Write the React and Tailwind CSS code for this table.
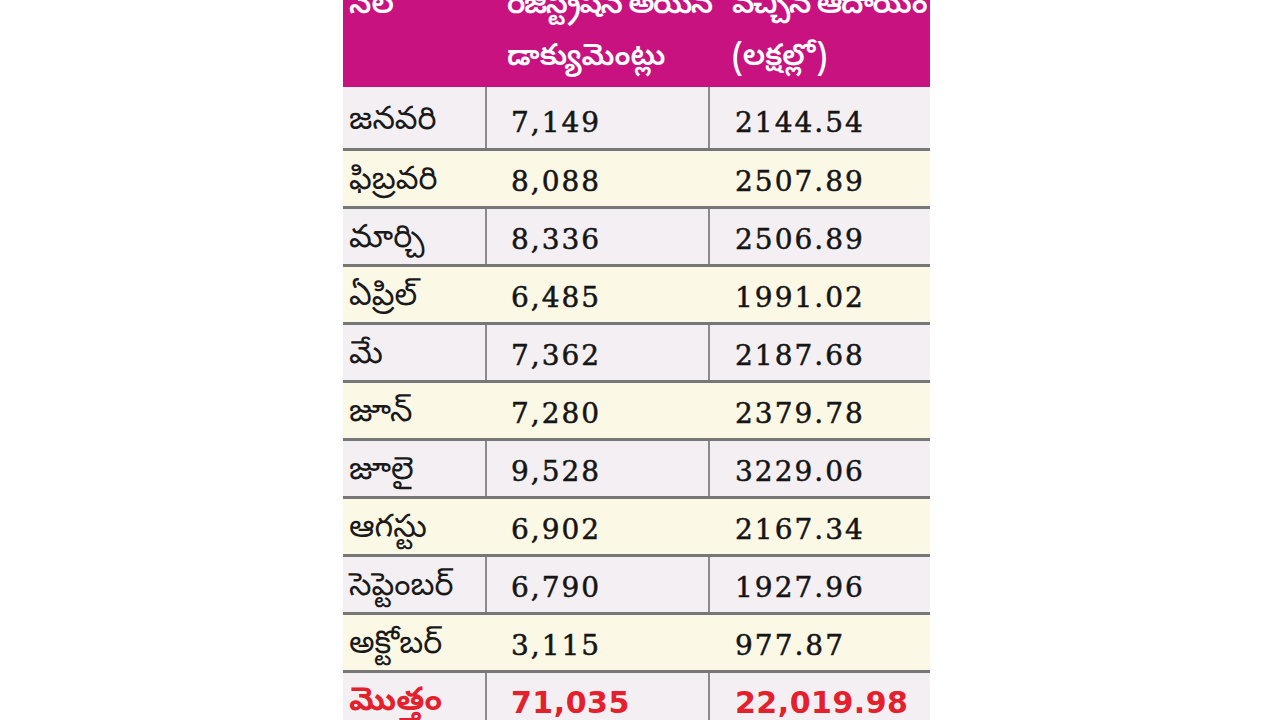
import React from "react";

const rows = [
  { month: "జనవరి", docs: "7,149", income: "2144.54" },
  { month: "ఫిబ్రవరి", docs: "8,088", income: "2507.89" },
  { month: "మార్చి", docs: "8,336", income: "2506.89" },
  { month: "ఏప్రిల్", docs: "6,485", income: "1991.02" },
  { month: "మే", docs: "7,362", income: "2187.68" },
  { month: "జూన్", docs: "7,280", income: "2379.78" },
  { month: "జూలై", docs: "9,528", income: "3229.06" },
  { month: "ఆగస్టు", docs: "6,902", income: "2167.34" },
  { month: "సెప్టెంబర్", docs: "6,790", income: "1927.96" },
  { month: "అక్టోబర్", docs: "3,115", income: "977.87" },
];

const telugu = "font-['Noto_Sans_Telugu','Lohit_Telugu','Gurajada','Noto_Sans',sans-serif]";
const num = "font-['DejaVu_Serif','Liberation_Serif',serif] [-webkit-text-stroke:0.5px_#151515]";

function Row({ r, i }) {
  const lavender = i % 2 === 0;
  const divider = lavender ? "border-r-2 border-[#8a8a8a]" : "border-r-2 border-transparent";
  const pad = i === 0 ? "pt-[10px]" : "pt-[6px]";
  return (
    <div
      className={`flex border-b-[3px] border-[#777777] ${lavender ? "bg-[#f3eff3]" : "bg-[#fcf8e6]"} ${
        i === 0 ? "h-[64px]" : "h-[58px]"
      }`}
    >
      <div className={`w-[144px] shrink-0 flex items-center pl-[6px] ${i === 0 ? "pt-[10px]" : "pt-[8px]"} text-[32px] text-[#1a1a1a] ${telugu} ${divider}`}>
        {r.month}
      </div>
      <div className={`w-[223px] shrink-0 flex items-center pl-[24px] ${pad} text-[28px] tracking-[2px] text-[#151515] ${num} ${divider}`}>
        {r.docs}
      </div>
      <div className={`flex-1 flex items-center pl-[25px] ${pad} text-[28px] tracking-[2px] text-[#151515] ${num}`}>
        {r.income}
      </div>
    </div>
  );
}

export default function App() {
  return (
    <div className="min-h-screen bg-white overflow-hidden">
      <div className="ml-[343px] w-[587px] -mt-[19px]">
        {/* header */}
        <div className={`flex bg-[#c8127f] text-white text-[30px] font-semibold leading-[52px] pb-[2px] ${telugu}`}>
          <div className="w-[144px] shrink-0 pl-[6px]">నెల</div>
          <div className="w-[223px] shrink-0 pl-[20px] whitespace-nowrap">
            <div className="tracking-[-1.5px]">రిజిస్ట్రేషన్ అయిన</div>
            <div>డాక్యుమెంట్లు</div>
          </div>
          <div className="flex-1 pl-[22px] whitespace-nowrap">
            <div className="tracking-[-1.5px]">వచ్చిన ఆదాయం</div>
            <div>(లక్షల్లో)</div>
          </div>
        </div>

        {rows.map((r, i) => (
          <Row key={r.month} r={r} i={i} />
        ))}

        {/* total */}
        <div className="flex h-[58px] bg-[#f3eff3] text-[#e4202c] font-bold">
          <div className={`w-[144px] shrink-0 flex items-center pl-[6px] pt-[4px] text-[32px] border-r-2 border-[#8a8a8a] ${telugu}`}>
            మొత్తం
          </div>
          <div className="w-[223px] shrink-0 flex items-center pl-[24px] text-[30px] tracking-[0.5px] border-r-2 border-[#8a8a8a] font-['DejaVu_Sans',sans-serif]">
            71,035
          </div>
          <div className="flex-1 flex items-center pl-[25px] text-[30px] tracking-[0.5px] font-['DejaVu_Sans',sans-serif]">
            22,019.98
          </div>
        </div>
      </div>
    </div>
  );
}
